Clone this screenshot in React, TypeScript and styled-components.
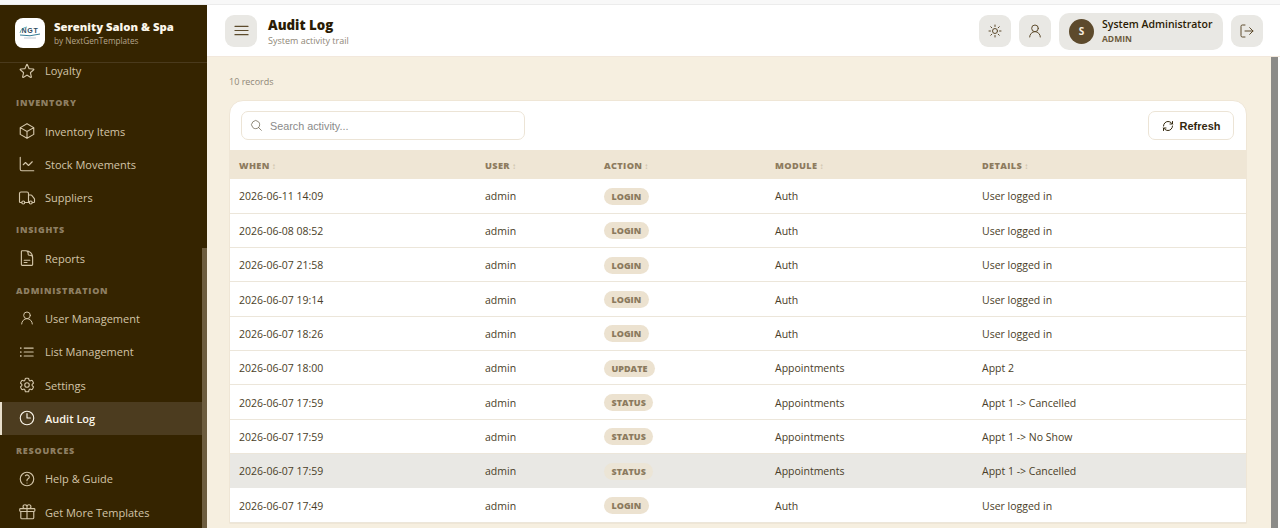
import React from "react";
import styled, { createGlobalStyle } from "styled-components";
import { ChartLine, LogOut, RefreshCw, Truck, UserRound } from "lucide-react";
import {
  HiOutlineStar, HiOutlineCube, HiOutlineDocumentText,
  HiOutlineListBullet, HiOutlineCog6Tooth, HiOutlineClock, HiOutlineQuestionMarkCircle,
  HiOutlineGift, HiOutlineSun, HiOutlineBars3, HiOutlineMagnifyingGlass,
} from "react-icons/hi2";

const Global = createGlobalStyle`
  html, body { margin: 0; padding: 0; height: 100%; overflow: hidden; background: #fff; }
  #root { height: 100%; }
  * { box-sizing: border-box; }
  body { font-family: "Open Sans", "Noto Sans", sans-serif; color: #3a2c14; }
`;

const Page = styled.div`display: flex; flex-direction: column; height: 528px; overflow: hidden;`;
const TopStrip = styled.div`height: 5px; flex: none; background: #f8f8f8; border-bottom: 1px solid #ececec;`;
const Shell = styled.div`display: flex; flex: 1; min-height: 0;`;

const Sidebar = styled.aside`width: 207px; flex: none; background: #352400; display: flex; flex-direction: column; min-height: 0;`;
const Brand = styled.div`height: 58px; flex: none; display: flex; align-items: center; gap: 9px; padding: 0 15px 1px; border-bottom: 1px solid #4a3a1c;`;
const Logo = styled.div`width: 30px; height: 30px; border-radius: 8px; background: #fff; flex: none; display: flex; align-items: center; justify-content: center;`;
const BrandText = styled.div`display: flex; flex-direction: column;`;
const BrandName = styled.div`font-size: 11.3px; font-weight: 800; color: #fbf6ea; line-height: 15px; white-space: nowrap;`;
const BrandSub = styled.div`font-size: 8.2px; color: #b5a78d; line-height: 12px; margin-top: 1px; white-space: nowrap;`;
const NavWrap = styled.div`display: flex; flex: 1; min-height: 0; overflow: hidden;`;
const Nav = styled.nav`width: 202px; flex: none; margin-top: -9px; display: flex; flex-direction: column;`;
const Thumb = styled.div`width: 5px; flex: none; margin-top: 185px; background: #6d5d3f;`;
const Section = styled.div`height: 27px; flex: none; display: flex; align-items: center; padding: 4px 0 0 16px; font-size: 9px; font-weight: 800; letter-spacing: .75px; color: #8e7f63;`;
const Item = styled.div<{ $active?: boolean }>`
  height: 33.35px; flex: none; display: flex; align-items: center; gap: 9px;
  padding-left: ${(p) => (p.$active ? "16px" : "18px")};
  border-left: ${(p) => (p.$active ? "2px solid #e8dfcc" : "none")};
  background: ${(p) => (p.$active ? "#4c3c1f" : "transparent")};
  color: ${(p) => (p.$active ? "#fbf6ea" : "#d3c5a8")};
  font-size: 11px; font-weight: ${(p) => (p.$active ? 600 : 500)};
  white-space: nowrap;
  svg { width: 18px; height: 18px; flex: none; }
`;
const SmallUser = styled(UserRound)`
  && { width: 16px; height: 16px; margin: 0 1px; }
`;

const Column = styled.div`flex: 1; min-width: 0; display: flex; flex-direction: column;`;
const Header = styled.header`height: 52px; flex: none; background: #fff; border-bottom: 1px solid #f2e8dc; display: flex; align-items: center; padding: 0 17px 0 18px; gap: 11px;`;
const IconBtn = styled.button`width: 32px; height: 32px; border: none; border-radius: 9px; background: #e9e8e4; color: #5d4b2c; display: flex; align-items: center; justify-content: center; padding: 0; flex: none; svg { width: 16px; height: 16px; }`;
const MenuBtn = styled(IconBtn)`svg { width: 19px; height: 19px; }`;
const Titles = styled.div`display: flex; flex-direction: column; margin: 2px 0 0; flex: 1;`;
const Title = styled.div`font-size: 13.3px; font-weight: 800; color: #2b1c04; line-height: 18px;`;
const Sub = styled.div`font-size: 9px; color: #8f8778; line-height: 12px; margin-top: 1px;`;
const Actions = styled.div`display: flex; align-items: center; gap: 8px;`;
const UserChip = styled.div`height: 37px; width: 164px; border-radius: 10px; background: #e9e8e4; display: flex; align-items: center; gap: 8px; padding: 0 10px; margin-top: 1px;`;
const Avatar = styled.div`width: 25px; height: 25px; border-radius: 50%; background: #5d4a2c; color: #f6efe0; font-size: 10px; font-weight: 700; display: flex; align-items: center; justify-content: center; flex: none;`;
const UserText = styled.div`display: flex; flex-direction: column;`;
const UserName = styled.div`font-size: 10.5px; font-weight: 600; color: #2b1c04; line-height: 15px; white-space: nowrap;`;
const UserRole = styled.div`font-size: 8.5px; font-weight: 700; color: #6d5b3d; line-height: 14px;`;

const Body = styled.div`flex: 1; min-height: 0; display: flex;`;
const Main = styled.main`flex: 1; min-width: 0; background: #f6efe0; padding: 19px 24px 0 22px; overflow: hidden;`;
const Count = styled.div`font-size: 9px; color: #8f8778; line-height: 12px; margin-bottom: 12px;`;
const Scroll = styled.div`width: 7px; flex: none; margin-right: 2px; background: #8b8b88;`;
const Card = styled.section`background: #fff; border: 1px solid #efe6d6; border-radius: 14px 14px 0 0; overflow: hidden;`;
const Toolbar = styled.div`height: 49px; display: flex; align-items: center; justify-content: space-between; padding: 0 12px 0 11px;`;
const Search = styled.div`width: 284px; height: 29px; border: 1px solid #ece4d6; border-radius: 7px; display: flex; align-items: center; gap: 7px; padding: 0 8px; color: #8a8a8a; font-family: "Liberation Sans", sans-serif; font-size: 10.8px; svg { width: 13px; height: 13px; color: #77705f; }`;
const Refresh = styled.button`width: 86px; height: 29px; border: 1px solid #ece4d6; border-radius: 7px; background: #fff; display: flex; align-items: center; justify-content: center; gap: 6px; padding: 0; font-family: "Liberation Sans", sans-serif; font-size: 11px; font-weight: 700; color: #33280f; svg { width: 12px; height: 12px; }`;
const Table = styled.table`width: 100%; border-collapse: collapse; table-layout: fixed;`;
const Th = styled.th`height: 29px; background: #efe6d5; padding: 1px 9px 0; text-align: left; font-size: 9.2px; font-weight: 800; letter-spacing: .35px; color: #8d7b5e; white-space: nowrap; span { font-weight: 400; color: #c9bda6; font-size: 8px; margin-left: 2px; letter-spacing: 0; }`;
const Tr = styled.tr<{ $hover?: boolean }>`background: ${(p) => (p.$hover ? "#e9e8e4" : "#fff")}; td { border-bottom: 1px solid ${(p) => (p.$hover ? "#e9e8e4" : "#ece6da")}; }`;
const Td = styled.td`height: 34.33px; padding: 1px 9px 0; font-size: 10.5px; color: #4a3e28; white-space: nowrap;`;
const Badge = styled.span`display: inline-block; height: 17px; line-height: 17px; padding: 0 7.5px; border-radius: 9px; background: #ece2d0; color: #8b7a5e; font-size: 9px; font-weight: 800; letter-spacing: 0; vertical-align: middle;`;
const HoverBadge = styled(Badge)`background: #ece5d6;`;

const rows: [string, string, string, string, boolean?][] = [
  ["2026-06-11 14:09", "LOGIN", "Auth", "User logged in"],
  ["2026-06-08 08:52", "LOGIN", "Auth", "User logged in"],
  ["2026-06-07 21:58", "LOGIN", "Auth", "User logged in"],
  ["2026-06-07 19:14", "LOGIN", "Auth", "User logged in"],
  ["2026-06-07 18:26", "LOGIN", "Auth", "User logged in"],
  ["2026-06-07 18:00", "UPDATE", "Appointments", "Appt 2"],
  ["2026-06-07 17:59", "STATUS", "Appointments", "Appt 1 -> Cancelled"],
  ["2026-06-07 17:59", "STATUS", "Appointments", "Appt 1 -> No Show"],
  ["2026-06-07 17:59", "STATUS", "Appointments", "Appt 1 -> Cancelled", true],
  ["2026-06-07 17:49", "LOGIN", "Auth", "User logged in"],
];

const columns: [string, number][] = [["WHEN", 246], ["USER", 119], ["ACTION", 171], ["MODULE", 207], ["DETAILS", 273]];

const NgtLogo = () => (
  <svg width="26" height="20" viewBox="0 0 26 20">
    <text x="13" y="10" textAnchor="middle" fontFamily="Liberation Sans, sans-serif" fontSize="7" fontWeight="700" letterSpacing=".8" fill="#2d4a5e">NGT</text>
    <path d="M3 10 Q4 5 10 4" fill="none" stroke="#1f8a9a" strokeWidth=".7" />
    <path d="M3 12 Q13 14 23 11" fill="none" stroke="#1f6f8a" strokeWidth=".9" />
    <path d="M7 15 H19" stroke="#9ab" strokeWidth=".6" />
  </svg>
);

export default function App() {
  return (
    <Page>
      <Global />
      <TopStrip />
      <Shell>
        <Sidebar>
          <Brand>
            <Logo><NgtLogo /></Logo>
            <BrandText>
              <BrandName>Serenity Salon &amp; Spa</BrandName>
              <BrandSub>by NextGenTemplates</BrandSub>
            </BrandText>
          </Brand>
          <NavWrap>
            <Nav>
              <Item><HiOutlineStar />Loyalty</Item>
              <Section>INVENTORY</Section>
              <Item><HiOutlineCube />Inventory Items</Item>
              <Item><ChartLine strokeWidth={1.5} />Stock Movements</Item>
              <Item><Truck strokeWidth={1.5} />Suppliers</Item>
              <Section>INSIGHTS</Section>
              <Item><HiOutlineDocumentText />Reports</Item>
              <Section>ADMINISTRATION</Section>
              <Item><SmallUser strokeWidth={1.5} />User Management</Item>
              <Item><HiOutlineListBullet />List Management</Item>
              <Item><HiOutlineCog6Tooth />Settings</Item>
              <Item $active><HiOutlineClock />Audit Log</Item>
              <Section>RESOURCES</Section>
              <Item><HiOutlineQuestionMarkCircle />Help &amp; Guide</Item>
              <Item><HiOutlineGift />Get More Templates</Item>
            </Nav>
            <Thumb />
          </NavWrap>
        </Sidebar>
        <Column>
          <Header>
            <MenuBtn><HiOutlineBars3 /></MenuBtn>
            <Titles>
              <Title>Audit Log</Title>
              <Sub>System activity trail</Sub>
            </Titles>
            <Actions>
              <IconBtn><HiOutlineSun /></IconBtn>
              <IconBtn><UserRound strokeWidth={1.5} /></IconBtn>
              <UserChip>
                <Avatar>S</Avatar>
                <UserText>
                  <UserName>System Administrator</UserName>
                  <UserRole>ADMIN</UserRole>
                </UserText>
              </UserChip>
              <IconBtn><LogOut strokeWidth={1.5} /></IconBtn>
            </Actions>
          </Header>
          <Body>
            <Main>
              <Count>10 records</Count>
              <Card>
                <Toolbar>
                  <Search><HiOutlineMagnifyingGlass />Search activity...</Search>
                  <Refresh><RefreshCw strokeWidth={2} />Refresh</Refresh>
                </Toolbar>
                <Table>
                  <colgroup>
                    {columns.map(([name, w]) => <col key={name} width={w} />)}
                  </colgroup>
                  <thead>
                    <tr>{columns.map(([name]) => <Th key={name}>{name}<span>↕</span></Th>)}</tr>
                  </thead>
                  <tbody>
                    {rows.map(([when, action, mod, details, hover], i) => (
                      <Tr key={i} $hover={hover}>
                        <Td>{when}</Td>
                        <Td>admin</Td>
                        <Td>{hover ? <HoverBadge>{action}</HoverBadge> : <Badge>{action}</Badge>}</Td>
                        <Td>{mod}</Td>
                        <Td>{details}</Td>
                      </Tr>
                    ))}
                  </tbody>
                </Table>
              </Card>
            </Main>
            <Scroll />
          </Body>
        </Column>
      </Shell>
    </Page>
  );
}
